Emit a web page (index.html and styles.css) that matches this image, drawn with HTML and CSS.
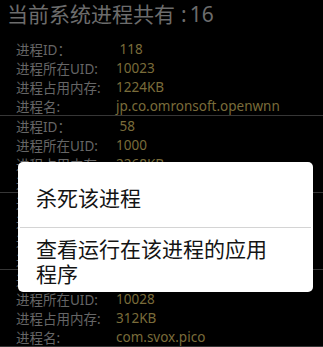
FILE: index.html
```html
<!DOCTYPE html>
<html lang="zh-CN">
<head>
<meta charset="utf-8">
<link rel="stylesheet" href="styles.css">
</head>
<body>
<div class="screen">
  <div class="title"><span class="cjk">当前系统进程共有</span><span class="colon">:</span><span class="num">16</span></div>
  <div class="list">
    <div class="item">
      <div class="row"><span class="label">进程ID：</span><span class="value">&nbsp;118</span></div>
      <div class="row"><span class="label">进程所在UID:</span><span class="value">10023</span></div>
      <div class="row"><span class="label">进程占用内存:</span><span class="value">1224KB</span></div>
      <div class="row"><span class="label">进程名:</span><span class="value">jp.co.omronsoft.openwnn</span></div>
    </div>
    <div class="item">
      <div class="row"><span class="label">进程ID：</span><span class="value">&nbsp;58</span></div>
      <div class="row"><span class="label">进程所在UID:</span><span class="value">1000</span></div>
      <div class="row"><span class="label">进程占用内存:</span><span class="value">2268KB</span></div>
      <div class="row"><span class="label">进程名:</span><span class="value">system</span></div>
    </div>
    <div class="item">
      <div class="row"><span class="label">进程ID：</span><span class="value">&nbsp;96</span></div>
      <div class="row"><span class="label">进程所在UID:</span><span class="value">10001</span></div>
      <div class="row"><span class="label">进程占用内存:</span><span class="value">1856KB</span></div>
      <div class="row"><span class="label">进程名:</span><span class="value">com.android.phone</span></div>
    </div>
    <div class="item">
      <div class="row"><span class="label">进程ID：</span><span class="value">&nbsp;231</span></div>
      <div class="row"><span class="label">进程所在UID:</span><span class="value">10028</span></div>
      <div class="row"><span class="label">进程占用内存:</span><span class="value">312KB</span></div>
      <div class="row"><span class="label">进程名:</span><span class="value">com.svox.pico</span></div>
    </div>
  </div>
  <div class="overlay">
    <div class="dialog">
      <div class="option first">杀死该进程</div>
      <div class="divider"></div>
      <div class="option second">查看运行在该进程的应用程序</div>
    </div>
  </div>
</div>
</body>
</html>
```
FILE: styles.css
```css
html, body {
  margin: 0;
  padding: 0;
  background: #000;
}
.screen {
  position: relative;
  width: 323px;
  height: 347px;
  overflow: hidden;
  background: #000;
  font-family: "Noto Sans", "Noto Sans CJK SC", sans-serif;
}
.title {
  height: 39px;
  box-sizing: border-box;
  padding: 1px 0 0 7px;
  line-height: 25px;
  color: #6c6c6c;
  white-space: nowrap;
  display: flex;
  align-items: baseline;
}
.title .cjk {
  font-family: "Noto Sans CJK SC", sans-serif;
  font-size: 21px;
}
.title .colon {
  font-size: 21px;
  padding: 0 3px 0 6px;
}
.title .num {
  font-size: 21px;
}
.list {
  display: flex;
  flex-direction: column;
}
.item {
  border-bottom: 1px solid #363636;
  display: flex;
  flex-direction: column;
}
.row {
  display: flex;
  height: 19px;
  align-items: center;
  font-size: 13.5px;
  white-space: nowrap;
}
.label {
  width: 100px;
  padding-left: 16px;
  color: #666666;
}
.value {
  color: #7a6c3a;
}
.overlay {
  position: absolute;
  inset: 0;
}
.dialog {
  position: absolute;
  left: 18px;
  top: 162px;
  width: 295px;
  height: 130px;
  background: #ffffff;
  border-radius: 5px;
  display: flex;
  flex-direction: column;
  font-family: "Noto Sans CJK SC", sans-serif;
  color: #141414;
}
.option {
  font-size: 21px;
  line-height: 25px;
  padding-left: 18px;
  padding-right: 32px;
}
.option.first {
  height: 65px;
  box-sizing: border-box;
  padding-top: 23px;
}
.divider {
  height: 1px;
  background: #d4d4d4;
  margin: 0 2px;
}
.option.second {
  padding-top: 8px;
}
```
